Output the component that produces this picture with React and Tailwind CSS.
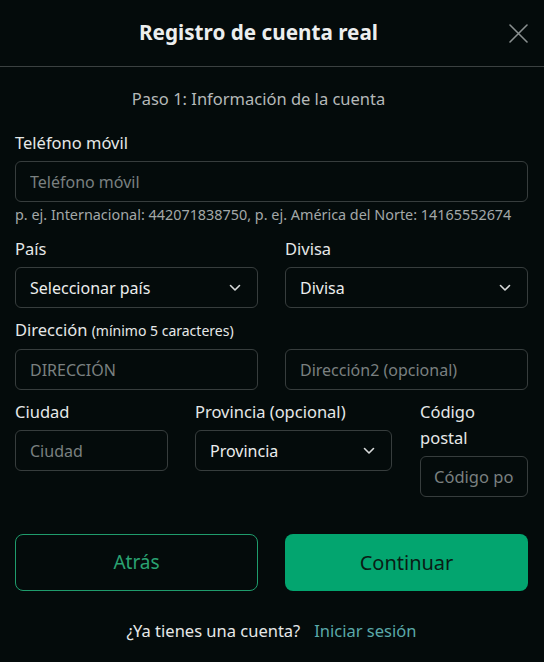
import { useState } from 'react';

const FONT = { fontFamily: '"Noto Sans", "Open Sans", sans-serif' };

function Chevron() {
  return (
    <svg width="12" height="8" viewBox="0 0 12 8" fill="none" className="shrink-0">
      <path d="M1.5 1.5 L6 6 L10.5 1.5" stroke="#d8dada" strokeWidth="1.6" strokeLinecap="round" strokeLinejoin="round" />
    </svg>
  );
}

function TextInput({ placeholder, value, onChange }) {
  return (
    <input
      type="text"
      value={value}
      onChange={(e) => onChange(e.target.value)}
      placeholder={placeholder}
      className="w-full h-[41px] rounded-[6px] border border-[#373d3d] bg-transparent px-[14px] text-[16px] text-[#e6e8e8] placeholder:text-[#7a8080] focus:outline-none focus:border-[#03a56f]"
    />
  );
}

function SelectBox({ label }) {
  return (
    <button
      type="button"
      className="w-full h-[41px] rounded-[6px] border border-[#373d3d] bg-transparent pl-[14px] pr-[16px] flex items-center justify-between text-[16px] text-[#eceeee]"
    >
      <span>{label}</span>
      <Chevron />
    </button>
  );
}

function Label({ children }) {
  return <label className="block text-[16.5px] leading-[26px] text-[#e6e8e8] mb-[5px]">{children}</label>;
}

export default function App() {
  const [form, setForm] = useState({ phone: '', address: '', address2: '', city: '', zip: '' });
  const set = (key) => (v) => setForm((f) => ({ ...f, [key]: v }));

  return (
    <div className="min-h-screen bg-[#040b0b] text-[#e6e8e8]" style={FONT}>
      <header className="h-[67px] border-b border-[#3b4141] flex items-center pl-[15px] pr-[16px]">
        <h1 className="flex-1 text-center text-[20.7px] font-bold text-[#eceeee]">Registro de cuenta real</h1>
        <button type="button" className="w-[26px] flex justify-end">
          <svg width="19" height="19" viewBox="0 0 19 19" fill="none">
            <path d="M1 1 L18 18 M18 1 L1 18" stroke="#8a9090" strokeWidth="1.6" strokeLinecap="round" />
          </svg>
        </button>
      </header>

      <main className="px-[15px] pr-[16px]">
        <p className="mt-[22px] text-center pr-[26px] text-[16.5px] leading-[20px] text-[#b5b9b9]">
          Paso 1: Información de la cuenta
        </p>

        <div className="mt-[21px]">
          <Label>Teléfono móvil</Label>
          <TextInput placeholder="Teléfono móvil" value={form.phone} onChange={set('phone')} />
          <p className="mt-[4px] text-[14.4px] leading-[18px] text-[#a3a8a8]">
            p. ej. Internacional: 442071838750, p. ej. América del Norte: 14165552674
          </p>
        </div>

        <div className="mt-[12px] grid grid-cols-2 gap-x-[27px]">
          <div>
            <Label>País</Label>
            <SelectBox label="Seleccionar país" />
          </div>
          <div>
            <Label>Divisa</Label>
            <SelectBox label="Divisa" />
          </div>
        </div>

        <div className="mt-[9px]">
          <Label>
            Dirección <span className="text-[14px]">(mínimo 5 caracteres)</span>
          </Label>
          <div className="grid grid-cols-2 gap-x-[27px]">
            <TextInput placeholder="DIRECCIÓN" value={form.address} onChange={set('address')} />
            <TextInput placeholder="Dirección2 (opcional)" value={form.address2} onChange={set('address2')} />
          </div>
        </div>

        <div className="mt-[9px] grid grid-cols-[153px_197px_1fr] gap-x-[27px] items-start">
          <div>
            <Label>Ciudad</Label>
            <TextInput placeholder="Ciudad" value={form.city} onChange={set('city')} />
          </div>
          <div>
            <Label>Provincia (opcional)</Label>
            <SelectBox label="Provincia" />
          </div>
          <div className="pl-px">
            <Label>
              Código
              <br />
              postal
            </Label>
            <input
              type="text"
              value={form.zip}
              onChange={(e) => set('zip')(e.target.value)}
              placeholder="Código postal"
              className="w-full h-[41px] rounded-[6px] border border-[#373d3d] bg-transparent px-[13px] text-[16.5px] text-[#e6e8e8] placeholder:text-[#7a8080] focus:outline-none"
            />
          </div>
        </div>

        <div className="mt-[37px] grid grid-cols-2 gap-x-[27px]">
          <button
            type="button"
            className="h-[57px] rounded-[8px] border border-[#1f9c6c] text-[19px] text-[#2aa272]"
          >
            Atrás
          </button>
          <button
            type="button"
            className="h-[57px] rounded-[8px] bg-[#03a56f] text-[20px] text-[#0a1c15]"
          >
            Continuar
          </button>
        </div>

        <p className="mt-[30px] text-center text-[16.5px] leading-[20px]">
          <span className="text-[#e6e8e8]">¿Ya tienes una cuenta?</span>
          <a href="#" className="ml-[14px] text-[#5aa9a9]">Iniciar sesión</a>
        </p>
      </main>
    </div>
  );
}
